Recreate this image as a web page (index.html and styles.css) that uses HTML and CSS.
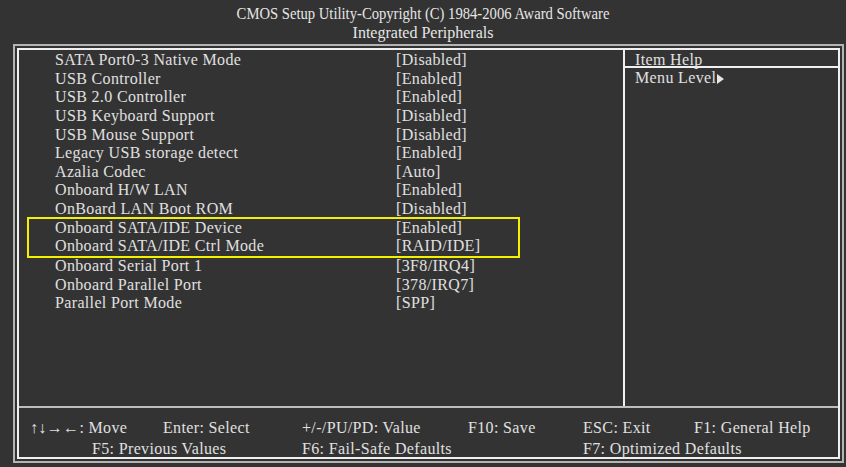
FILE: index.html
```html
<!DOCTYPE html>
<html lang="en">
<head>
    <meta charset="UTF-8">
    <title>CMOS Setup Utility - Integrated Peripherals</title>
    <link rel="stylesheet" href="styles.css">
</head>
<body>
    <div class="title">
        <div class="copy">CMOS Setup Utility-Copyright (C) 1984-2006 Award Software</div>
        <div>Integrated Peripherals</div>
    </div>
    <div class="frame">
        <div class="inner">
            <div class="main">
                <div class="items">
                    <div class="row"><span>SATA Port0-3 Native Mode</span><span>[Disabled]</span></div>
                    <div class="row"><span>USB Controller</span><span>[Enabled]</span></div>
                    <div class="row"><span>USB 2.0 Controller</span><span>[Enabled]</span></div>
                    <div class="row"><span>USB Keyboard Support</span><span>[Disabled]</span></div>
                    <div class="row"><span>USB Mouse Support</span><span>[Disabled]</span></div>
                    <div class="row"><span>Legacy USB storage detect</span><span>[Enabled]</span></div>
                    <div class="row"><span>Azalia Codec</span><span>[Auto]</span></div>
                    <div class="row"><span>Onboard H/W LAN</span><span>[Enabled]</span></div>
                    <div class="row"><span>OnBoard LAN Boot ROM</span><span>[Disabled]</span></div>
                    <div class="mark">
                        <div class="row"><span>Onboard SATA/IDE Device</span><span>[Enabled]</span></div>
                        <div class="row"><span>Onboard SATA/IDE Ctrl Mode</span><span>[RAID/IDE]</span></div>
                    </div>
                    <div class="row"><span>Onboard Serial Port 1</span><span>[3F8/IRQ4]</span></div>
                    <div class="row"><span>Onboard Parallel Port</span><span>[378/IRQ7]</span></div>
                    <div class="row"><span>Parallel Port Mode</span><span>[SPP]</span></div>
                </div>
                <div class="help">
                    <div class="help-head">Item Help</div>
                    <div class="help-body">Menu Level<svg class="arrow" width="7" height="10" viewBox="0 0 7 10"><path d="M0 0L7 5L0 10Z" fill="#e6e6e6"/></svg></div>
                </div>
            </div>
            <div class="keys">
                <span>&uarr;&darr;&rarr;&larr;: Move</span>
                <span>Enter: Select</span>
                <span>+/-/PU/PD: Value</span>
                <span>F10: Save</span>
                <span>ESC: Exit</span>
                <span>F1: General Help</span>
                <span class="f5">F5: Previous Values</span>
                <span class="f6">F6: Fail-Safe Defaults</span>
                <span class="f7">F7: Optimized Defaults</span>
            </div>
        </div>
    </div>
</body>
</html>
```

FILE: styles.css
```css
body {
    margin: 0;
    background: #333333;
    color: #e0e0e0;
    font-family: "Liberation Serif", "Times New Roman", serif;
    font-size: 16px;
    letter-spacing: 0.35px;
    width: 846px;
    height: 467px;
    overflow: hidden;
}
.title {
    height: 44px;
    text-align: center;
    line-height: 19px;
    padding-top: 4px;
    box-sizing: border-box;
    color: #e6e6e6;
    letter-spacing: 0;
}
.copy {
    transform: scaleX(0.915);
}
.frame {
    margin: 0 2px 0 13px;
    border: 2px solid #b4b4b4;
    padding: 2px;
    height: 419px;
    box-sizing: border-box;
}
.inner {
    border: 2px solid #f0f0f0;
    height: 100%;
    box-sizing: border-box;
    display: grid;
    grid-template-rows: 358px 1fr;
}
.main {
    display: grid;
    grid-template-columns: 604px 1fr;
    border-bottom: 2px solid #bdbdbd;
}
.items {
    padding-top: 1px;
}
.row {
    display: grid;
    grid-template-columns: 341px 1fr;
    padding-left: 36px;
    height: 18.65px;
    line-height: 18.65px;
}
.mark {
    margin-left: 8px;
    margin-right: 103px;
    border: 2px solid #f5f000;
    margin-top: -2px;
    margin-bottom: -1px;
}
.mark .row {
    padding-left: 26px;
}
.help {
    border-left: 2px solid #f0f0f0;
}
.help-head {
    border-bottom: 2px solid #f0f0f0;
    padding-left: 10px;
    height: 16px;
    line-height: 19px;
}
.help-body {
    padding-left: 10px;
    line-height: 20px;
}
.arrow {
    margin-left: 1px;
    vertical-align: -1px;
}
.keys {
    display: grid;
    grid-template-columns: 133px 139px 166px 115px 111px 1fr;
    padding-left: 11px;
    padding-top: 9px;
    line-height: 21px;
}
.f5 {
    grid-column: 1 / 3;
    padding-left: 62px;
}
.f6 {
    grid-column: 3 / 5;
}
.f7 {
    grid-column: 5 / 7;
}
```
